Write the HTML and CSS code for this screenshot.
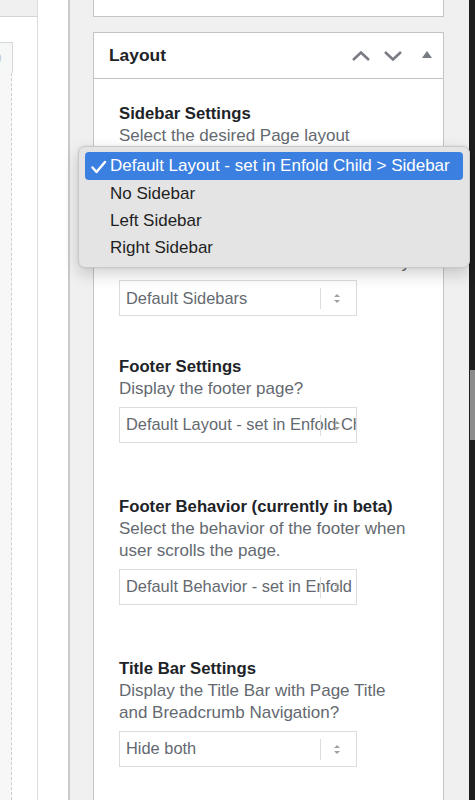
FILE: index.html
```html
<!DOCTYPE html>
<html lang="en">
<head>
<meta charset="utf-8">
<title>Layout</title>
<link rel="stylesheet" href="styles.css">
</head>
<body>
<div class="screen">
  <div class="left">
    <div class="left-a">
      <div class="left-top"></div>
      <div class="left-gap"></div>
      <div class="left-input"><span>0</span></div>
      <div class="left-dash"></div>
    </div>
    <div class="left-b"></div>
  </div>

  <div class="main">
    <div class="panel panel-top"></div>
    <div class="panel layout">
      <div class="panel-head">
        <h2 class="panel-title">Layout</h2>
        <div class="actions">
          <svg class="ico chev" width="18" height="10" viewBox="0 0 18 10"><path d="M1 9 L9 1.5 L17 9" fill="none" stroke="#787c82" stroke-width="2.6"/></svg>
          <svg class="ico chev" width="18" height="10" viewBox="0 0 18 10"><path d="M1 1 L9 8.5 L17 1" fill="none" stroke="#787c82" stroke-width="2.6"/></svg>
          <svg class="ico tri" width="10" height="7" viewBox="0 0 10 7"><path d="M0 7 L5 0 L10 7 Z" fill="#787c82"/></svg>
        </div>
      </div>
      <div class="panel-body">
        <div class="field">
          <div class="label">Sidebar Settings</div>
          <div class="desc">Select the desired Page layout</div>
          <div class="select"><span class="val">Default Layout - set in Enfold Child &gt; Sidebar</span><i class="sep"></i><i class="arrows"></i></div>
        </div>
        <div class="field">
          <div class="label">Custom Sidebar</div>
          <div class="desc">Choose a custom sidebar for this entry</div>
          <div class="select"><span class="val">Default Sidebars</span><i class="sep"></i><i class="arrows"></i></div>
        </div>
        <div class="field">
          <div class="label">Footer Settings</div>
          <div class="desc">Display the footer page?</div>
          <div class="select"><span class="val">Default Layout - set in Enfold Child</span><i class="sep"></i><i class="arrows"></i></div>
        </div>
        <div class="field wide">
          <div class="label">Footer Behavior (currently in beta)</div>
          <div class="desc">Select the behavior of the footer when user scrolls the page.</div>
          <div class="select"><span class="val">Default Behavior - set in Enfold Child</span><i class="sep"></i><i class="arrows"></i></div>
        </div>
        <div class="field wide">
          <div class="label">Title Bar Settings</div>
          <div class="desc">Display the Title Bar with Page Title and Breadcrumb Navigation?</div>
          <div class="select"><span class="val">Hide both</span><i class="sep"></i><i class="arrows"></i></div>
        </div>
      </div>
    </div>
  </div>

  <div class="scrollbar"><div class="thumb"></div></div>

  <div class="menu">
    <div class="item selected">
      <svg class="check" width="16" height="14" viewBox="0 0 16 14"><path d="M1.5 7.5 L5.5 12 L14 2" fill="none" stroke="#fff" stroke-width="2.4" stroke-linecap="round" stroke-linejoin="round"/></svg>
      <span>Default Layout - set in Enfold Child &gt; Sidebar</span>
    </div>
    <div class="item"><span>No Sidebar</span></div>
    <div class="item"><span>Left Sidebar</span></div>
    <div class="item"><span>Right Sidebar</span></div>
  </div>
</div>
</body>
</html>
```

FILE: styles.css
```css
* { box-sizing: border-box; }
html, body { margin: 0; padding: 0; }
body {
  font-family: "Liberation Sans", Arial, sans-serif;
  background: #f0f0f1;
  width: 475px;
  height: 800px;
  overflow: hidden;
}
.screen {
  position: relative;
  display: flex;
  width: 475px;
  height: 800px;
  overflow: hidden;
}

/* left editor strip */
.left {
  width: 70px;
  flex-shrink: 0;
  display: flex;
  border-right: 2px solid #c9c9cb;
  background: #fff;
}
.left-a {
  width: 38px;
  border-right: 1px solid #dcdcde;
  display: flex;
  flex-direction: column;
}
.left-top {
  height: 17px;
  flex-shrink: 0;
  background: #f0f0f1;
  border-bottom: 1px solid #d4d4d6;
}
.left-gap { height: 25px; flex-shrink: 0; }
.left-input {
  width: 13px;
  height: 31px;
  flex-shrink: 0;
  background: #f6f7f7;
  border-top: 1px solid #d8d8da;
  border-right: 1px solid #d8d8da;
  overflow: hidden;
  font-size: 15px;
  color: #c0c0c0;
  line-height: 30px;
  text-indent: -7px;
}
.left-dash {
  width: 12px;
  flex: 1;
  background: #f7f7f7;
  border-right: 1px dashed #cfcfd1;
}
.left-b { flex: 1; }

/* main column */
.main {
  width: 399px;
  flex-shrink: 0;
  padding: 0 25px 0 23px;
  background: #f0f0f1;
  display: flex;
  flex-direction: column;
  gap: 15px;
}
.panel {
  flex-shrink: 0;
  background: #fff;
  border: 1px solid #c3c4c7;
}
.panel-top {
  height: 17px;
  border-top: none;
}
.panel-head {
  height: 46px;
  border-bottom: 1px solid #c3c4c7;
  display: flex;
  align-items: center;
  padding-left: 15px;
  padding-right: 11px;
}
.panel-title {
  margin: 0;
  flex: 1;
  font-size: 17.4px;
  font-weight: 700;
  color: #1d2327;
}
.actions {
  display: flex;
  align-items: center;
}
.ico { display: block; }
.chev { margin-left: 14px; }
.tri { margin-left: 20px; margin-top: -2px; }

.panel-body {
  padding: 24px 0 40px 25px;
}
.field + .field { margin-top: 40px; }
.field.wide { margin-top: 53px; }
.label {
  font-size: 16.7px;
  font-weight: 700;
  line-height: 22px;
  color: #1d2327;
}
.desc {
  font-size: 17px;
  line-height: 22.5px;
  color: #646970;
  width: 293px;
}
.select {
  position: relative;
  margin-top: 6px;
  width: 238px;
  height: 36px;
  border: 1px solid #dcdcde;
  background: #fff;
  overflow: hidden;
  display: flex;
  align-items: center;
  padding-left: 6px;
}
.val {
  white-space: nowrap;
  font-size: 16.4px;
  color: #646970;
}
.sep {
  position: absolute;
  left: 200px;
  top: 7px;
  width: 1px;
  height: 21px;
  background: #dedede;
}
.arrows {
  position: absolute;
  left: 214px;
  top: 13px;
  width: 7px;
  height: 10px;
}
.arrows::before, .arrows::after {
  content: "";
  position: absolute;
  left: 0;
  border-left: 3.5px solid transparent;
  border-right: 3.5px solid transparent;
}
.arrows::before { top: 0; border-bottom: 3.5px solid #a0a0a0; }
.arrows::after { top: 6px; border-top: 3.5px solid #a0a0a0; }

/* right scrollbar strip */
.scrollbar {
  width: 6px;
  flex-shrink: 0;
  background: #1e1e1e;
  position: relative;
}
.thumb {
  position: absolute;
  top: 370px;
  left: 1px;
  width: 5px;
  height: 70px;
  background: #8c8c8c;
}

/* open select menu (overlay) */
.menu {
  position: absolute;
  left: 78px;
  top: 146px;
  width: 392px;
  height: 122px;
  background: #e4e4e4;
  border: 1px solid #c9c9c9;
  border-radius: 7px;
  box-shadow: 0 6px 16px rgba(0,0,0,0.18), 0 0 3px rgba(0,0,0,0.08);
  padding: 5px 6px 7px 6px;
}
.item {
  height: 27px;
  display: flex;
  align-items: center;
  padding-left: 25px;
  font-size: 17px;
  color: #1f1f1f;
  white-space: nowrap;
  position: relative;
}
.item.selected {
  height: 28px;
  background: #3b7fe0;
  border-radius: 4px;
  color: #fff;
}
.check {
  position: absolute;
  left: 6px;
  top: 8px;
}
```
